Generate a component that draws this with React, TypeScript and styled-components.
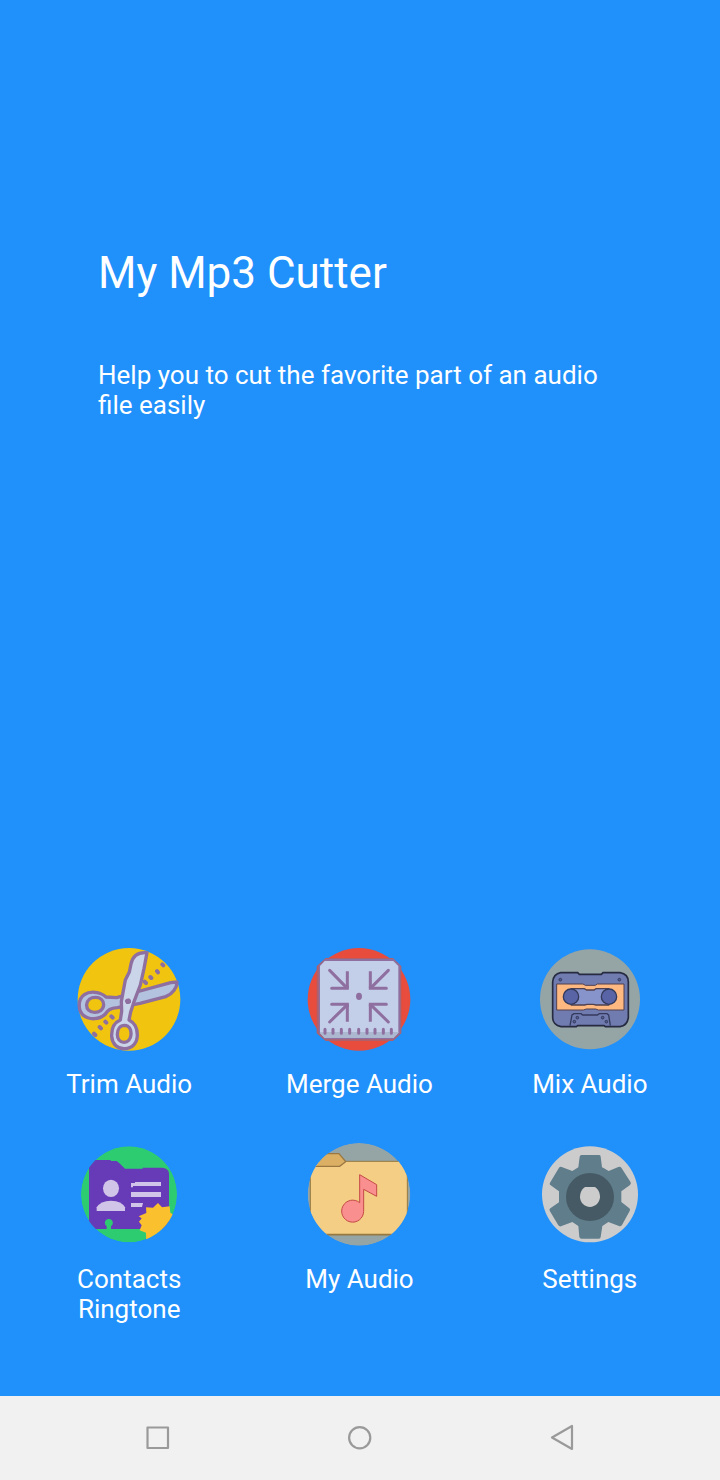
import React from "react";
import styled, { createGlobalStyle } from "styled-components";

const GlobalStyle = createGlobalStyle`
  *, *::before, *::after { box-sizing: border-box; }
  body {
    margin: 0;
    background: #2090fb;
    font-family: Roboto, "Liberation Sans", sans-serif;
  }
`;

const Screen = styled.div`
  min-height: 100vh;
  display: flex;
  flex-direction: column;
  background: #2090fb;
  color: #fff;
`;

const Main = styled.main`
  flex: 1;
  display: flex;
  flex-direction: column;
  justify-content: space-between;
  gap: 80px;
  padding: 247px 0 72px;
`;

const Intro = styled.header`
  display: flex;
  flex-direction: column;
  gap: 61px;
  padding: 0 98px;
`;

const Title = styled.h1`
  margin: 0;
  font-size: 44px;
  line-height: 52px;
  font-weight: 400;
`;

const Tagline = styled.p`
  margin: 0;
  font-size: 26px;
  line-height: 30px;
`;

const Menu = styled.nav`
  display: grid;
  grid-template-columns: repeat(3, 1fr);
  row-gap: 36px;
  padding: 0 15px 0 14px;
`;

const MenuButton = styled.button`
  display: flex;
  flex-direction: column;
  align-items: center;
  justify-content: flex-start;
  gap: 9px;
  padding: 0;
  border: 0;
  background: none;
  color: inherit;
  font: inherit;
  cursor: pointer;
`;

const Label = styled.span`
  font-size: 26px;
  line-height: 30px;
  text-align: center;
  white-space: pre-line;
`;

const Picture = styled.svg`
  display: block;
  width: 120px;
  height: 120px;
`;

const SystemBar = styled.footer`
  display: grid;
  grid-template-columns: repeat(3, 28%);
  justify-content: center;
  justify-items: center;
  align-items: center;
  height: 84px;
  background: #f1f1f1;
`;

const SystemButton = styled.button`
  display: flex;
  align-items: center;
  justify-content: center;
  width: 48px;
  height: 48px;
  padding: 0;
  border: 0;
  background: none;
  cursor: pointer;
`;

const SystemGlyph = styled.svg`
  width: 28px;
  height: 28px;
  fill: none;
  stroke: #9a9a9a;
  stroke-width: 2.2;
  stroke-linejoin: round;
`;

function TrimIcon() {
  return (
    <Picture viewBox="-3 0 360 360" aria-hidden="true">
      <circle cx="177" cy="178" r="154" fill="#f1c40f" />
      <g stroke="#8e6f9f" strokeWidth="12" strokeLinecap="round">
        <path d="M277 73l3 3M261 93l3 4M241 111l3 3M224 125l4 4M124 229l4 4M106 245l3 3M89 261l4 4M72 281l4 4" />
      </g>
      <g stroke="#8e6f9f" strokeWidth="10" strokeLinejoin="round">
        <path
          fill="#b3c2df"
          fillRule="evenodd"
          d="M108 171C91 155 60 152 43 164C24 177 23 208 38 224C57 241 89 240 106 222C114 210 121 204 142 203L210 190L287 170C308 162 322 141 321 126L302 128L199 156L140 173ZM76 172C91 172 101 181 101 194C100 209 88 217 74 217C58 217 49 207 50 194C51 181 62 172 76 172Z"
        />
        <path
          fill="#cbd5ea"
          fillRule="evenodd"
          d="M231 38C206 36 188 46 183 72L178 96L166 120L154 184L155 214L151 240C132 248 124 264 125 289C127 312 142 327 164 326C188 325 202 308 202 285C202 263 193 248 177 240L182 216L191 188L211 135L222 86ZM164 256C178 257 184 269 183 284C182 298 174 307 162 307C149 307 142 297 142 283C142 268 150 256 164 256Z"
        />
      </g>
      <path d="M164 183l4-6 9-2 6 5v7l-5 5h-9z" fill="#8e6f9f" />
    </Picture>
  );
}

function MergeIcon() {
  return (
    <Picture viewBox="-3 0 360 360" aria-hidden="true">
      <circle cx="177" cy="178" r="154" fill="#e74c3c" />
      <path d="M77 54H279L304 79V280L279 303H77L50 280V79Z" fill="#b0606a" />
      <path d="M76 57H280L301 77V279L280 298H75L56 279V77Z" fill="#8e6f9f" />
      <path d="M74 63H280L295 78V278L280 294H74L60 278V78Z" fill="#c3cee8" />
      <path d="M60 276H295V279L280 294H74L60 279Z" fill="#abb8d0" />
      <g fill="none" stroke="#8e6f9f" strokeWidth="9">
        <path strokeLinecap="round" d="M89 91L139 142M265 91L214 142M89 246L140 196M265 246L214 196" />
        <path d="M142 94V145M211 94V145M142 245V193M211 245V193" />
        <path strokeLinecap="round" d="M95 145H142V140M259 145H211V140M95 193H142V199M259 193H211V199" />
      </g>
      <ellipse cx="177" cy="169" rx="9" ry="11" fill="#8e6f9f" />
      <path
        d="M75 268v12M99 268v12M124 268v12M149 268v12M176 268v12M201 268v12M225 268v12M250 268v12M274 268v12"
        stroke="#8e6f9f"
        strokeWidth="9"
        strokeLinecap="round"
      />
    </Picture>
  );
}

function MixIcon() {
  return (
    <Picture viewBox="0 0 360 360" aria-hidden="true">
      <circle cx="180" cy="178" r="150" fill="#95a5a6" />
      <path
        d="M92 98H143L148 103H214L219 98H270Q295 102 295 126V234Q291 257 270 260H226L222 257H143L139 260H93Q69 255 68 234V126Q70 102 92 98Z"
        fill="#707bb0"
        stroke="#262b40"
        strokeWidth="5"
      />
      <path
        d="M80 132H159L166 136H196L202 132H282V210H205L197 207H169L160 210H80Z"
        fill="#ffb980"
        stroke="#52404c"
        strokeWidth="3"
      />
      <path d="M122 146H163L170 150H192L198 146H238V195H198L190 193H171L164 195H122Z" fill="#8794cc" />
      <path d="M122 146H163L170 150H192L198 146H238M122 195H164L171 193H190L198 195H238" fill="none" stroke="#52404c" strokeWidth="4" />
      <circle cx="123" cy="170" r="23" fill="#5964a6" stroke="#343a5c" strokeWidth="4" />
      <circle cx="237" cy="170" r="23" fill="#5964a6" stroke="#343a5c" strokeWidth="4" />
      <path
        d="M120 257L126 225L132 221H153L158 225H202L208 221H231L236 225L241 257"
        fill="none"
        stroke="#343a5c"
        strokeWidth="4"
      />
      <g fill="#555e92" stroke="#343a5c" strokeWidth="3">
        <circle cx="91" cy="119" r="4" />
        <circle cx="268" cy="119" r="4" />
        <circle cx="142" cy="233" r="4" />
        <circle cx="218" cy="233" r="4" />
        <circle cx="133" cy="245" r="4" />
        <circle cx="229" cy="245" r="4" />
      </g>
    </Picture>
  );
}

function ContactsIcon() {
  return (
    <Picture viewBox="-3 0 360 360" aria-hidden="true">
      <clipPath id="contacts-disc">
        <circle cx="177" cy="178" r="144" />
      </clipPath>
      <g clipPath="url(#contacts-disc)">
        <circle cx="177" cy="178" r="144" fill="#2ecc71" />
        <path
          d="M57 70L66 75H122V78H140L150 86L165 101H218V98H278Q297 100 297 117V282H123V274A12 12 0 1 0 110 274V282H57Z"
          fill="#673ab7"
        />
        <g fill="#d1c4e9">
          <ellipse cx="123" cy="160" rx="24" ry="26" />
          <path d="M80 228V217Q91 198 123 197Q155 198 165 217V228Z" />
          <path d="M195 141H273V153H189V157H183V144H195ZM183 171H273V186H183ZM183 204H219L216 216H183Z" />
        </g>
        <path
          d="M264 204L276 217L299 214L301 233L312 240L320 330H229L228 293L209 286L215 271L207 260L215 250L206 244L229 234L228 217L249 218Z"
          fill="#fbc02d"
        />
      </g>
    </Picture>
  );
}

function FolderIcon() {
  return (
    <Picture viewBox="-3 0 360 360" aria-hidden="true">
      <clipPath id="folder-disc">
        <circle cx="177" cy="178" r="154" />
      </clipPath>
      <g clipPath="url(#folder-disc)">
        <circle cx="177" cy="178" r="154" fill="#95a5a6" />
        <path d="M31 82H120L137 79H322V299H31Z" fill="#f5ce85" />
        <path d="M40 94V56H116L137 79L119 94Z" fill="#dbb065" />
        <path d="M40 94H119L137 80L117 56H60" fill="none" stroke="#9a7741" strokeWidth="4" />
        <path d="M137 79H322V299" fill="none" stroke="#967841" strokeWidth="3" />
        <path d="M31 94V299" stroke="#967841" strokeWidth="3" />
        <path d="M31 299H322" stroke="#967841" strokeWidth="5" />
      </g>
      <path
        d="M179 119L230 149V184L191 163V229A33 33 0 1 1 179 203Z"
        fill="#f98f8f"
        stroke="#c44a46"
        strokeWidth="3"
      />
    </Picture>
  );
}

function SettingsIcon() {
  return (
    <Picture viewBox="0 0 360 360" aria-hidden="true">
      <circle cx="180" cy="178" r="144" fill="#cccccc" />
      <path
        d="M154 60H208Q212 61 212 65L216 97L222 100L236 108L265 96Q271 94 274 98L302 142Q304 146 300 150L274 169V201L298 220Q302 223 299 228L276 270Q272 275 267 273L235 261L217 273L212 306Q211 311 207 311H155Q149 311 148 306L145 273L127 261L93 274Q88 275 85 271L59 227Q57 222 61 220L87 202V169L62 151Q57 148 60 143L87 98Q90 94 95 96L127 108L145 97L149 65Q150 60 154 60Z"
        fill="#607d8b"
      />
      <circle cx="180" cy="186" r="72" fill="#455a64" />
      <path
        d="M166 156H194C203 160 210 171 210 187C208 205 196 215 180 216C163 215 151 204 150 187C150 171 157 160 166 156Z"
        fill="#cccccc"
      />
    </Picture>
  );
}

const actions = [
  { label: "Trim Audio", Icon: TrimIcon },
  { label: "Merge Audio", Icon: MergeIcon },
  { label: "Mix Audio", Icon: MixIcon },
  { label: "Contacts\nRingtone", Icon: ContactsIcon },
  { label: "My Audio", Icon: FolderIcon },
  { label: "Settings", Icon: SettingsIcon },
];

export default function App() {
  return (
    <Screen>
      <GlobalStyle />
      <Main>
        <Intro>
          <Title>My Mp3 Cutter</Title>
          <Tagline>Help you to cut the favorite part of an audio file easily</Tagline>
        </Intro>
        <Menu aria-label="Tools">
          {actions.map(({ label, Icon }) => (
            <MenuButton key={label} type="button">
              <Icon />
              <Label>{label}</Label>
            </MenuButton>
          ))}
        </Menu>
      </Main>
      <SystemBar>
        <SystemButton type="button" aria-label="Recent apps">
          <SystemGlyph viewBox="0 0 28 28">
            <rect x="3.5" y="3.5" width="20.5" height="20.5" />
          </SystemGlyph>
        </SystemButton>
        <SystemButton type="button" aria-label="Home">
          <SystemGlyph viewBox="0 0 28 28">
            <circle cx="13.7" cy="13.7" r="10.6" />
          </SystemGlyph>
        </SystemButton>
        <SystemButton type="button" aria-label="Back">
          <SystemGlyph viewBox="0 0 28 28">
            <path d="M24 2V25L4 13.5Z" />
          </SystemGlyph>
        </SystemButton>
      </SystemBar>
    </Screen>
  );
}
